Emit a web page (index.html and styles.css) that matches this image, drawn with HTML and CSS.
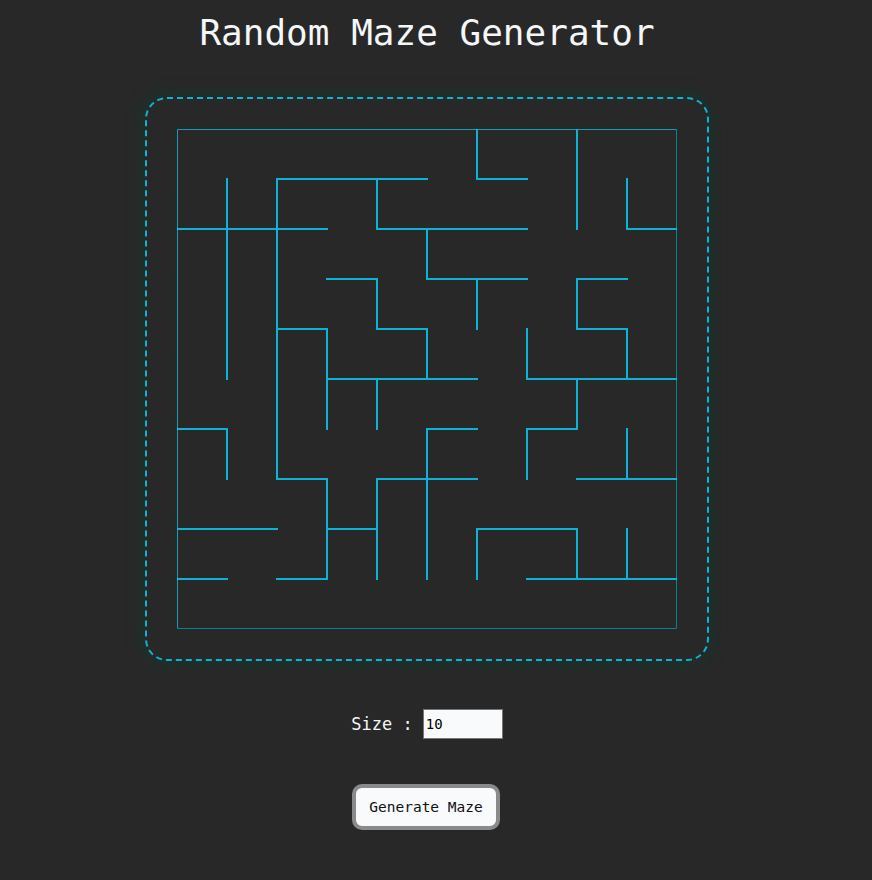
FILE: index.html
```html
<!DOCTYPE html>
<html>
<head>
<meta charset="utf-8">
<title>Random Maze Generator</title>
<link rel="stylesheet" href="styles.css">
</head>
<body>
<div class="page">
  <h1 class="title">Random Maze Generator</h1>
  <div class="maze-frame">
    <svg class="maze" width="500" height="500" viewBox="0 0 500 500">
      <path class="edge-a" d="M0.5 500V0.5H500"/>
      <path class="edge-b" d="M0 499.5H499.5V0"/>
      <path class="walls" d="M100 50H250 M300 50H350
        M0 100H150 M200 100H350 M450 100H500
        M150 150H200 M250 150H350 M400 150H450
        M100 200H150 M200 200H250 M400 200H450
        M150 250H300 M350 250H500
        M0 300H50 M250 300H300 M350 300H400
        M100 350H150 M200 350H300 M400 350H500
        M0 400H100 M150 400H200 M300 400H400
        M0 450H50 M100 450H150 M350 450H500
        M50 50V250 M50 300V350
        M100 50V350
        M150 200V300 M150 350V450
        M200 50V100 M200 150V200 M200 250V300 M200 350V450
        M250 100V150 M250 200V250 M250 300V450
        M300 0V50 M300 150V200 M300 400V450
        M350 200V250 M350 300V350
        M400 0V100 M400 150V200 M400 250V300 M400 400V450
        M450 50V100 M450 200V250 M450 300V350 M450 400V450"/>
    </svg>
  </div>
  <div class="size-row">
    <label class="size-label" for="size">Size :</label>
    <input class="size-input" id="size" type="text" value="10">
  </div>
  <button class="gen-btn">Generate Maze</button>
</div>
</body>
</html>
```
FILE: styles.css
```css
html, body {
  margin: 0;
  padding: 0;
  background: #282828;
}
body {
  font-family: "DejaVu Sans Mono", "Liberation Mono", monospace;
  color: #ffffff;
}
.page {
  width: 854px;
  display: flex;
  flex-direction: column;
  align-items: center;
}
.title {
  margin: 10px 0 0;
  font-size: 36px;
  font-weight: normal;
  line-height: 46px;
  color: #f4f6f8;
}
.maze-frame {
  margin-top: 41px;
  padding: 30px;
  border: 2px dashed #0fb4d4;
  border-radius: 22px;
  box-shadow: 0 0 14px 4px #1a332d;
  display: flex;
}
.maze {
  display: block;
}
.maze path {
  fill: none;
}
.edge-a {
  stroke: #0f9fba;
  stroke-width: 1;
}
.edge-b {
  stroke: #0b7f96;
  stroke-width: 1;
}
.walls {
  stroke: #0bb4d6;
  stroke-width: 2;
  stroke-linecap: square;
}
.size-row {
  margin-top: 48px;
  display: flex;
  align-items: center;
  gap: 10px;
}
.size-label {
  font-size: 17px;
  color: #f4f6f8;
}
.size-input {
  box-sizing: border-box;
  width: 80px;
  height: 30px;
  padding: 0 2px;
  border: 1px solid #767676;
  background: #f8fafc;
  font-family: "DejaVu Sans Mono", "Liberation Mono", monospace;
  font-size: 14px;
  color: #000;
  outline: none;
}
.gen-btn {
  margin-top: 45px;
  margin-right: 2px;
  box-sizing: border-box;
  width: 148px;
  height: 46px;
  border: 4px solid #8a8a8a;
  border-radius: 10px;
  background: #f8fafc;
  font-family: "DejaVu Sans Mono", "Liberation Mono", monospace;
  font-size: 14.5px;
  color: #111;
  padding: 0;
}
```
